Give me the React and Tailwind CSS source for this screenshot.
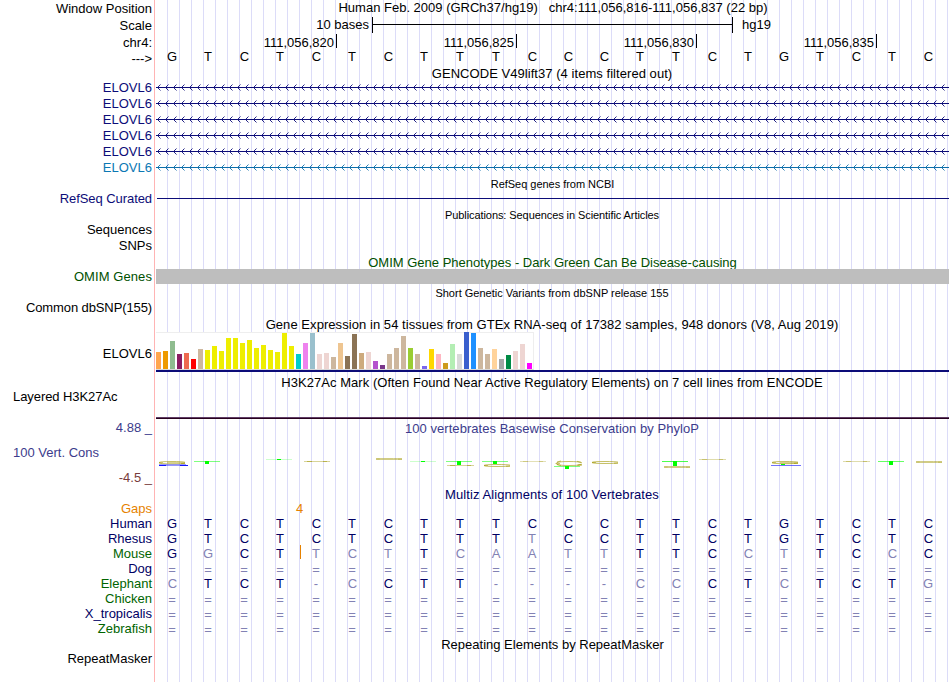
import React from "react";

const BASES = "GTCTCTCTTTCCCTTCTGTCTC";

// Lower-case letters are mismatches and are drawn in the pale tone.
const SPECIES = [
  { name: "Human", tone: "text-[#000064]", seq: "GTCTCTCTTTCCCTTCTGTCTC" },
  { name: "Rhesus", tone: "text-[#000064]", seq: "GTCTCTCTTTtCCTTCTGTCTC" },
  { name: "Mouse", tone: "text-[#006400]", seq: "GgCTtctTcaattTTCctTCcC", insert: true },
  { name: "Dog", tone: "text-[#000064]", seq: "=".repeat(22) },
  { name: "Elephant", tone: "text-[#006400]", seq: "cTCT-cCTT----ccCTcTCTg" },
  { name: "Chicken", tone: "text-[#006400]", seq: "=".repeat(22) },
  { name: "X_tropicalis", tone: "text-[#000064]", seq: "=".repeat(22) },
  { name: "Zebrafish", tone: "text-[#006400]", seq: "=".repeat(22) },
];

const Y = "#EEEE00";
const TAN = "#CDB79E";
const TISSUES = [
  ["#FFA54F", 17], ["#EE9A00", 18], ["#8FBC8F", 28], ["#8B1C62", 15], ["#EE6A50", 16], ["#FF0000", 10], [TAN, 20],
  [Y, 19], [Y, 23], [Y, 18], [Y, 31], [Y, 31], [Y, 26], [Y, 29], [Y, 21], [Y, 24], [Y, 19], [Y, 17], [Y, 36], [Y, 23],
  ["#00CDCD", 15], ["#EE82EE", 26], ["#9AC0CD", 36], ["#EED5D2", 15], ["#EED5D2", 16], [TAN, 12], ["#EEC591", 26],
  ["#8B7355", 13], ["#8B7355", 35], ["#CDAA7D", 16], ["#EED5D2", 17], ["#B452CD", 8], ["#7A378B", 4], [TAN, 15],
  [TAN, 21], [TAN, 33], ["#9ACD32", 21], [TAN, 15], ["#7A67EE", 3], ["#FFD700", 20], ["#FFB6C1", 15],
  ["#CD9B1D", 6], ["#B4EEB4", 25], ["#D9D9D9", 15], ["#3A5FCD", 37], ["#1E90FF", 36], [TAN, 21], [TAN, 15],
  ["#FFD39B", 20], ["#A6A6A6", 10], ["#008B45", 14], ["#EED5D2", 18], ["#EED5D2", 25], ["#FF00FF", 6],
];

const ARROWS = Array.from({ length: 99 }, (_, i) => {
  const x = 2.5 + i * 8;
  return `M${x + 3} 4.5L${x} 7.5L${x + 3} 10.5`;
}).join("");

function Row({ h, label, labelClass = "", children, className = "" }) {
  return (
    <div className={`flex shrink-0 ${h}`}>
      <div className={`w-[155px] shrink-0 whitespace-pre pr-[3px] text-right ${labelClass}`}>{label}</div>
      <div className={`w-[794px] shrink-0 whitespace-pre ${className}`}>{children}</div>
    </div>
  );
}

function baseClass(c) {
  if (c === "=") return "pt-px text-[#8282b4]";
  if (c === "C") return "pl-px";
  if (c === "c") return "pl-px text-[#8282b4]";
  return /[A-Z]/.test(c) ? "" : "text-[#8282b4]";
}

function Sequence({ seq, tone }) {
  return (
    <div className={`-ml-px grid w-[792px] grid-cols-22 text-center ${tone}`}>
      {seq.split("").map((c, i) => (
        <span key={i} className={baseClass(c)}>
          {c.toUpperCase()}
        </span>
      ))}
    </div>
  );
}

function GeneLine({ color }) {
  return (
    <svg width="794" height="16" className="block" fill="none" stroke={color}>
      <path d="M1 7.5H794" shapeRendering="crispEdges" />
      <path d={ARROWS} strokeWidth="0.9" />
    </svg>
  );
}

// Flattened logo letters; coordinates are page pixels shifted by the viewBox.
function LogoC({ x, y, w = 27, h, o = 1 }) {
  if (!h) {
    return (
      <g stroke="#a09600" opacity={o}>
        <path d={`M${x} ${y + 0.5}h${w}`} opacity="0.4" />
        <path d={`M${x + 3} ${y + 0.5}h5M${x + w - 7} ${y + 0.5}h4`} opacity="0.5" />
      </g>
    );
  }
  return (
    <g fill="none" stroke="#a09600" opacity={o}>
      <path
        d={`M${x + w - 1} ${y + h * 0.36}Q${x + w - 4} ${y + 0.5} ${x + w / 2} ${y + 0.5}Q${x + 1} ${y + 0.5} ${x + 1} ${y + h / 2}Q${x + 1} ${y + h - 0.5} ${x + w / 2} ${y + h - 0.5}Q${x + w - 3} ${y + h - 0.5} ${x + w - 1} ${y + h * 0.64}`}
        opacity="0.6"
      />
      <path d={`M${x + 1} ${y + h / 2}h4M${x + w - 5} ${y + h - 0.8}h4`} opacity="0.55" />
    </g>
  );
}

function LogoT({ x, y, h, o = 0.5 }) {
  return (
    <g fill="#00ff00">
      <rect x={x} y={y} width="26" height="1" opacity={o} />
      <rect x={x + 11} y={y} width="4" height={h} />
    </g>
  );
}

function Logo() {
  return (
    <svg width="794" height="20" viewBox="155 453 794 20" className="block">
      <LogoC x={158} y={461} w={28} h={3.4} />
      <path d="M167 462.8h18" stroke="#a09600" opacity="0.6" />
      <path d="M159 464.5h27" stroke="#5050ff" opacity="0.55" />
      <path d="M159 465.5h7M180 465.5h8" stroke="#1414ff" />
      <path d="M166 465.5h14" stroke="#1414ff" opacity="0.45" />
      <LogoT x={194} y={461} h={3} />
      <LogoT x={266} y={459} h={1} o={0.2} />
      <LogoC x={304} y={461} w={26} />
      <LogoC x={375} y={458} w={28} h={2} o={0.8} />
      <LogoT x={410} y={461} h={1} o={0.2} />
      <LogoT x={446} y={461} h={4} />
      <LogoC x={447} y={465} />
      <LogoT x={482} y={461} h={3} />
      <LogoC x={483} y={464} w={28} h={3} />
      <LogoC x={520} y={461} w={26} o={0.7} />
      <LogoC x={555} y={461} w={28} h={5} />
      <path d="M557 462l4-1M557 464.5l4 1M577 461.3l4 1M577 465.3l4-1" stroke="#a09600" opacity="0.6" />
      <LogoT x={554} y={466} h={3} />
      <LogoC x={591} y={461} w={28} h={3} />
      <LogoT x={662} y={461} h={5} o={0.7} />
      <LogoC x={663} y={466} w={28} h={2} o={0.8} />
      <LogoC x={699} y={459} o={0.8} />
      <LogoC x={771} y={461} w={28} h={3.2} />
      <path d="M780 462.8h18" stroke="#a09600" opacity="0.6" />
      <rect x="781" y="464" width="4" height="1" fill="#00ff00" />
      <path d="M771 465.5h30" stroke="#1414ff" opacity="0.6" />
      <LogoC x={843} y={461} o={0.8} />
      <LogoT x={878} y={461} h={4} o={0.6} />
      <LogoC x={915} y={461} w={28} h={2} o={0.8} />
    </svg>
  );
}

export default function App() {
  return (
    <div className="h-[682px] w-[950px] overflow-hidden bg-white font-['Liberation_Sans',Arial,sans-serif] text-[13px] leading-4 text-black">
      <div className="flex h-full flex-col bg-[linear-gradient(#ffb4b4,#ffb4b4),repeating-linear-gradient(to_right,#dcdcf8_0px,#dcdcf8_1px,transparent_1px,transparent_12px)] bg-[length:1px_100%,781px_100%] bg-[position:154px_0px,167px_0px] bg-no-repeat">
        <Row h="h-[17px]" label="Window Position" labelClass="pt-px" className="pl-[2px] text-center">
          {"Human Feb. 2009 (GRCh37/hg19)   chr4:111,056,816-111,056,837 (22 bp)"}
        </Row>
        <Row h="h-[17px]" label="Scale" labelClass="pt-px" className="flex">
          <div className="w-[217px] pr-[3px] text-right">10 bases</div>
          <div className="flex h-4 w-[361px] items-center border-x border-black">
            <div className="mb-px h-px w-full bg-black" />
          </div>
          <div className="pl-[9px]">hg19</div>
        </Row>
        <Row h="h-[15px]" label="chr4:" labelClass="pt-px" className="flex">
          <div className="h-[14px] w-[182px] border-r border-black pr-[2px] pt-px text-right">111,056,820</div>
          <div className="h-[14px] w-[180px] border-r border-black pr-[2px] pt-px text-right">111,056,825</div>
          <div className="h-[14px] w-[180px] border-r border-black pr-[2px] pt-px text-right">111,056,830</div>
          <div className="h-[14px] w-[180px] border-r border-black pr-[2px] pt-px text-right">111,056,835</div>
        </Row>
        <Row h="h-[17px]" label="--->" labelClass="pt-[2px]">
          <Sequence seq={BASES} tone="text-black" />
        </Row>
        <Row h="h-[14px]" className="text-center tracking-[0.05px]">GENCODE V49lift37 (4 items filtered out)</Row>
        {[0, 1, 2, 3, 4].map((i) => (
          <Row key={i} h="h-4" label="ELOVL6" labelClass="text-[#0c0c78]">
            <GeneLine color="#0c0c78" />
          </Row>
        ))}
        <Row h="h-4" label="ELOVL6" labelClass="text-[#0c78b4]">
          <GeneLine color="#0c6eaa" />
        </Row>
        <Row h="h-[15px]" className="pl-px text-center text-[11px] tracking-[-0.03px]">RefSeq genes from NCBI</Row>
        <Row h="h-4" label="RefSeq Curated" labelClass="text-[#0c0c78] tracking-[-0.07px]" className="pl-[2px] pt-[7px]">
          <div className="h-px bg-[#0c0c78]" />
        </Row>
        <Row h="h-[15px]" className="text-center text-[11px] tracking-[-0.08px]">
          Publications: Sequences in Scientific Articles
        </Row>
        <Row h="h-4" label="Sequences" />
        <Row h="h-4" label="SNPs" />
        <Row h="h-[15px]" className="pl-px pt-px text-center text-[#005000]">
          OMIM Gene Phenotypes - Dark Green Can Be Disease-causing
        </Row>
        <Row h="h-4" label="OMIM Genes" labelClass="text-[#005000] tracking-[0.08px]" className="pl-px">
          <div className="h-[15px] bg-[#bebebe]" />
        </Row>
        <Row h="h-[15px]" className="text-center text-[11px]">Short Genetic Variants from dbSNP release 155</Row>
        <Row h="h-4" label="Common dbSNP(155)" labelClass="tracking-[-0.11px]" />
        <Row h="h-4" className="pt-px text-center tracking-[0.06px]">
          Gene Expression in 54 tissues from GTEx RNA-seq of 17382 samples, 948 donors (V8, Aug 2019)
        </Row>
        <Row h="h-10" label="ELOVL6" labelClass="pt-[14px]" className="pl-px">
          <div className="flex h-[38px] w-[378px] items-end gap-[2px] border-b border-r border-b-[#d8d8d8] border-r-[#eeeeee] bg-[linear-gradient(#eeeeee_1px,#ffffff_1px)]">
            {TISSUES.map(([color, height], i) => (
              <div key={i} className="w-[5px] shrink-0" style={{ backgroundColor: color, height }} />
            ))}
          </div>
          <div className="h-[2px] bg-[#0c0c78]" />
        </Row>
        <Row h="h-[17px]" className="pt-[3px] text-center tracking-[0.045px]">
          H3K27Ac Mark (Often Found Near Active Regulatory Elements) on 7 cell lines from ENCODE
        </Row>
        <Row h="h-[31px]" label="Layered H3K27Ac" labelClass="!text-left pl-[13px] tracking-[-0.07px]" className="pl-px pt-[28px]">
          <div className="h-px bg-[#5f3c64]" />
          <div className="h-px bg-[#28001e]" />
        </Row>
        <Row
          h="h-[67px]"
          label={
            <div className="flex flex-col gap-[9px] text-[#3c3c8c]">
              <div>4.88 _</div>
              <div className="pl-[13px] text-left">100 Vert. Cons</div>
              <div className="text-[#783c3c]">-4.5 _</div>
            </div>
          }
        >
          <div className="mb-[16px] pt-px text-center tracking-[0.04px] text-[#3c3c8c]">
            100 vertebrates Basewise Conservation by PhyloP
          </div>
          <Logo />
        </Row>
        <Row h="h-[14px]" className="text-center tracking-[0.08px] text-[#000064]">Multiz Alignments of 100 Vertebrates</Row>
        <Row h="h-[15px]" label="Gaps" labelClass="text-[#e68200]" className="pl-[141px] text-[#e68200]">4</Row>
        {SPECIES.map((s) => (
          <Row key={s.name} h="h-[15px]" label={s.name} labelClass={s.tone} className="relative">
            <Sequence seq={s.seq} tone="text-[#000064]" />
            {s.insert && <div className="absolute left-[145px] top-[-1px] h-[14px] w-px bg-[#e68200]" />}
          </Row>
        ))}
        <Row h="h-[15px]" className="pl-px pt-px text-center">Repeating Elements by RepeatMasker</Row>
        <Row h="h-4" label="RepeatMasker" />
      </div>
    </div>
  );
}
